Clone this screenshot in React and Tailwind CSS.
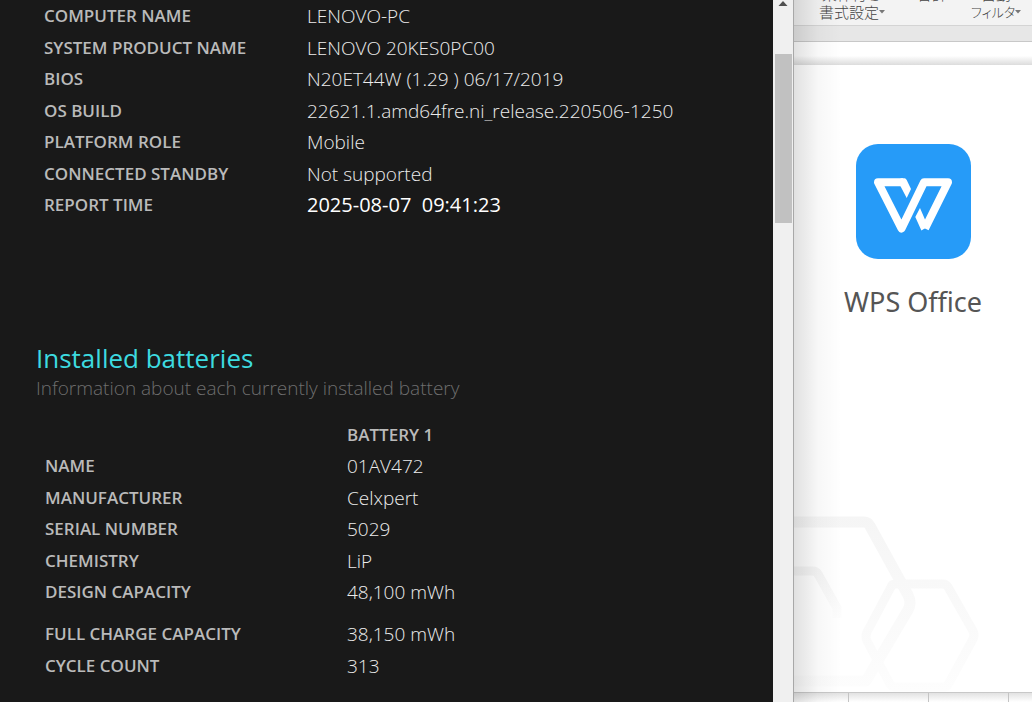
import { clsx } from "clsx";

const systemInfo = [
  { label: "COMPUTER NAME", value: "LENOVO-PC" },
  { label: "SYSTEM PRODUCT NAME", value: "LENOVO 20KES0PC00" },
  { label: "BIOS", value: "N20ET44W (1.29 ) 06/17/2019" },
  { label: "OS BUILD", value: "22621.1.amd64fre.ni_release.220506-1250" },
  { label: "PLATFORM ROLE", value: "Mobile" },
  { label: "CONNECTED STANDBY", value: "Not supported" },
  { label: "REPORT TIME", value: "2025-08-07  09:41:23", strong: true },
];

const batteryInfo = [
  { label: "NAME", value: "01AV472" },
  { label: "MANUFACTURER", value: "Celxpert" },
  { label: "SERIAL NUMBER", value: "5029" },
  { label: "CHEMISTRY", value: "LiP" },
  { label: "DESIGN CAPACITY", value: "48,100 mWh" },
  { label: "FULL CHARGE CAPACITY", value: "38,150 mWh", gap: true },
  { label: "CYCLE COUNT", value: "313" },
];

const InfoRow = ({ label, value, strong, gap }) => (
  <tr className={gap ? "h-[42px]" : "odd:h-8 even:h-[31px]"}>
    <th
      scope="row"
      className={clsx(
        "p-0 text-left text-[17px] leading-6 font-semibold text-[#bababa]",
        gap && "pt-[10px]"
      )}
    >
      {label}
    </th>
    <td
      className={clsx(
        "p-0 leading-[30px] whitespace-pre",
        strong ? "text-xl leading-[30px] font-normal text-white" : "text-[19px] font-light text-[#ececec]",
        gap && "pt-[10px]"
      )}
    >
      {value}
    </td>
  </tr>
);

const BatteryReport = () => (
  <main className="min-w-0 flex-1 overflow-hidden bg-[#191919] font-['Open_Sans','Noto_Sans',sans-serif]">
    {/* System information */}
    <table className="ml-11 table-fixed border-collapse">
      <colgroup>
        <col className="w-[263px]" />
        <col className="w-[420px]" />
      </colgroup>
      <tbody>
        {systemInfo.map((row) => (
          <InfoRow key={row.label} {...row} />
        ))}
      </tbody>
    </table>

    {/* Installed batteries */}
    <section className="mt-[119px]">
      <h2 className="ml-9 text-[26px] leading-9 font-normal text-[#3ddbe0]">
        Installed batteries
      </h2>
      <p className="ml-9 text-[19px] leading-6 font-light text-[#6e6e6e]">
        Information about each currently installed battery
      </p>
      <table className="mt-5 ml-[45px] table-fixed border-collapse">
        <colgroup>
          <col className="w-[302px]" />
          <col className="w-[380px]" />
        </colgroup>
        <thead>
          <tr className="h-[30px]">
            <td className="p-0"></td>
            <th
              scope="col"
              className="p-0 text-left text-[17px] leading-6 font-semibold text-[#bababa]"
            >
              BATTERY 1
            </th>
          </tr>
        </thead>
        <tbody>
          {batteryInfo.map((row) => (
            <InfoRow key={row.label} {...row} />
          ))}
        </tbody>
      </table>
    </section>
  </main>
);

const Scrollbar = () => (
  <div className="flex w-[21px] shrink-0 flex-col border-r border-[#a8a8a8] bg-[#f0f0f0]">
    <button type="button" aria-label="Scroll up" className="flex h-[54px] justify-center">
      <svg width="10" height="7" viewBox="0 0 10 7" fill="#505050">
        <path d="M5 1 9.5 6h-9z" />
      </svg>
    </button>
    <div className="mr-px ml-0.5 h-[169px] bg-[#c1c1c1]"></div>
  </div>
);

const RibbonButton = ({ top, bottom, className }) => (
  <button
    type="button"
    className={clsx("flex shrink-0 flex-col items-center text-[15px] leading-[18px]", className)}
  >
    <span>{top}</span>
    <span className="flex h-[18px] items-center">
      {bottom}
      {bottom && (
        <svg width="6" height="4" viewBox="0 0 6 4" fill="#777">
          <path d="M0 0h6L3 3.5z" />
        </svg>
      )}
    </span>
  </button>
);

const WpsLogo = () => (
  <svg width="115" height="115" viewBox="0 0 115 115">
    <rect width="115" height="115" rx="22" fill="#269bf8" />
    <path
      d="M47 38.300H22L45.500 84.500 68 38.300H92L69 84.500"
      fill="none"
      stroke="#fff"
      strokeWidth="8"
      strokeLinejoin="round"
    />
    <path
      d="M44.500 42.300V34.300H48.500Q50 34.300 50.700 36L55 45 50.700 54zM64 64 59.300 73 65.400 86.500 72 82.500z"
      fill="#fff"
    />
  </svg>
);

const WpsWindow = () => (
  <aside className="relative flex w-[238px] shrink-0 flex-col overflow-hidden bg-white">
    <div className="flex h-[26px] shrink-0 items-end overflow-hidden border-b border-[#d4d4d4] bg-[#f3f3f3] pb-1 pl-[25px] font-['Noto_Sans_CJK_JP',sans-serif] font-light text-[#444]">
      <RibbonButton top="条件付き" bottom="書式設定" />
      <RibbonButton top="合計" className="ml-8" />
      <RibbonButton
        top="自動"
        bottom={<span className="text-[13px] [font-feature-settings:'palt']">フィルタ</span>}
        className="ml-6"
      />
    </div>
    <div className="h-4 shrink-0 border-b border-[#c8c8c8] bg-[#e7e7e7]"></div>
    <div className="h-[23px] shrink-0 bg-linear-to-b from-white from-60% to-[#dcdcdc]"></div>

    <div className="relative flex flex-1 flex-col items-center bg-white pt-[79px]">
      <WpsLogo />
      <p className="mt-[25px] font-['Noto_Sans',sans-serif] text-[27px] leading-9 text-[#555]">
        WPS Office
      </p>
      <svg
        className="absolute bottom-0 left-0"
        width="238"
        height="180"
        viewBox="0 0 238 180"
        fill="none"
        strokeLinejoin="round"
      >
        <defs>
          <linearGradient id="hexFade" gradientUnits="userSpaceOnUse" x1="0" y1="0" x2="0" y2="180">
            <stop offset="0" stopColor="#f5f5f5" />
            <stop offset="1" stopColor="#fdfdfd" />
          </linearGradient>
          <linearGradient id="smallHexFade" gradientUnits="userSpaceOnUse" x1="0" y1="59" x2="0" y2="115">
            <stop offset="0" stopColor="#f5f5f5" />
            <stop offset="1" stopColor="#fff" />
          </linearGradient>
        </defs>
        <path stroke="url(#hexFade)" strokeWidth="11" d="M-20 10H70Q74 10 76 14L114 83Q118 91 114 98L72 169H-20" />
        <path stroke="url(#smallHexFade)" strokeWidth="9" d="M-20 59H19Q22 59 24 62L43 96V106" />
        <path
          stroke="url(#hexFade)"
          strokeWidth="9"
          d="M101 72H149Q152 72 154 75L179 119Q181 123 179 127L155 171Q153 175 150 175H101Q98 175 96 172L73 129Q71 125 73 120L97 75Q98 72 101 72z"
        />
      </svg>
    </div>

    {/* Sheet cells below the splash card */}
    <div className="flex h-[10px] shrink-0 border-t border-[#c8c8c8] bg-linear-to-b from-[#e2e2e2] to-white">
      <div className="w-[55px] border-r border-[#c4c4c4]"></div>
      <div className="w-20 border-r border-[#c4c4c4]"></div>
      <div className="w-20 border-r border-[#c4c4c4]"></div>
    </div>

    {/* Shadow cast by the report window */}
    <div className="pointer-events-none absolute inset-y-0 left-0 w-12 bg-linear-to-r from-black/12 via-black/3 to-transparent"></div>
  </aside>
);

const App = () => {
  return (
    <div className="flex h-screen overflow-hidden">
      <BatteryReport />
      <Scrollbar />
      <WpsWindow />
    </div>
  );
};

export default App;
